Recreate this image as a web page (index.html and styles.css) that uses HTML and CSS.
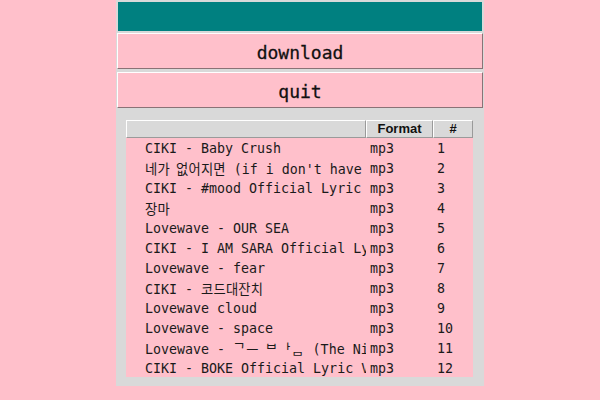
FILE: index.html
```html
<!DOCTYPE html>
<html>
<head>
<meta charset="utf-8">
<link rel="stylesheet" href="styles.css">
</head>
<body>
<div class="app">
  <div class="banner"></div>
  <button class="btn">download</button>
  <button class="btn">quit</button>
  <div class="tree">
    <div class="head">
      <div class="hcell"></div>
      <div class="hcell">Format</div>
      <div class="hcell">#</div>
    </div>
    <div class="row"><div class="c0">CIKI - Baby Crush</div><div class="c1">mp3</div><div class="c2">1</div></div>
    <div class="row"><div class="c0"><span class="ko">네가 없어지면</span> (if i don't have you)</div><div class="c1">mp3</div><div class="c2">2</div></div>
    <div class="row"><div class="c0">CIKI - #mood Official Lyric Video</div><div class="c1">mp3</div><div class="c2">3</div></div>
    <div class="row"><div class="c0"><span class="ko">장마</span></div><div class="c1">mp3</div><div class="c2">4</div></div>
    <div class="row"><div class="c0">Lovewave - OUR SEA</div><div class="c1">mp3</div><div class="c2">5</div></div>
    <div class="row"><div class="c0">CIKI - I AM SARA Official Lyric Video</div><div class="c1">mp3</div><div class="c2">6</div></div>
    <div class="row"><div class="c0">Lovewave - fear</div><div class="c1">mp3</div><div class="c2">7</div></div>
    <div class="row"><div class="c0">CIKI - <span class="ko">코드대잔치</span></div><div class="c1">mp3</div><div class="c2">8</div></div>
    <div class="row"><div class="c0">Lovewave cloud</div><div class="c1">mp3</div><div class="c2">9</div></div>
    <div class="row"><div class="c0">Lovewave - space</div><div class="c1">mp3</div><div class="c2">10</div></div>
    <div class="row"><div class="c0">Lovewave - <span class="jamo">ᄀ&#x200C;ᅳ ᄇ&#x200C;ᅡ&#x200C;ᆷ</span> (The Night)</div><div class="c1">mp3</div><div class="c2">11</div></div>
    <div class="row"><div class="c0">CIKI - BOKE Official Lyric Video</div><div class="c1">mp3</div><div class="c2">12</div></div>
  </div>
</div>
</body>
</html>
```
FILE: styles.css
```css
html, body {
  margin: 0;
  padding: 0;
  background: #ffc0cb;
}
.app {
  width: 368px;
  margin: 0 auto 0 116px;
  background: #d9d9d9;
  padding: 2px 0 9px 0;
  display: flex;
  flex-direction: column;
}
.banner {
  height: 29px;
  margin: 0 2px;
  background: #008080;
}
.btn {
  margin: 2px 1px 0 1px;
  height: 36px;
  padding: 2px 0 0 0;
  background: #ffc0cb;
  border-style: solid;
  border-width: 1px;
  border-color: #ffffff #8a7276 #8a7276 #ffffff;
  font-family: "DejaVu Sans Mono", monospace;
  font-size: 18px;
  color: #111;
  -webkit-text-stroke: 0.3px #111;
}
.btn + .btn {
  margin-top: 3px;
}
.tree {
  margin: 12px 11px 0 10px;
  background: #ffc0cb;
  display: flex;
  flex-direction: column;
}
.head {
  display: grid;
  grid-template-columns: 240px 67px 40px;
  height: 17px;
  background: #d9d9d9;
}
.hcell {
  border-style: solid;
  border-width: 1px;
  border-color: #ffffff #9a9a9a #9a9a9a #ffffff;
  font-family: "Liberation Sans", Arial, sans-serif;
  font-weight: bold;
  font-size: 13px;
  line-height: 16px;
  text-align: center;
  color: #111;
}
.row {
  display: grid;
  grid-template-columns: 240px 67px 40px;
  height: 20px;
  font-family: "DejaVu Sans Mono", "Noto Sans CJK KR", monospace;
  font-size: 13.3px;
  line-height: 17px;
  color: #1a1a1a;
}
.c0, .c1, .c2 {
  padding-top: 3px;
  white-space: nowrap;
  overflow: hidden;
}
.c0 {
  padding-left: 19px;
}
.c1, .c2 {
  padding-left: 4px;
}
.ko {
  font-family: "Noto Sans CJK KR", sans-serif;
  letter-spacing: 0.2px;
  word-spacing: 3px;
}
.jamo {
  font-family: "Noto Sans CJK KR", sans-serif;
  letter-spacing: 0.9px;
  word-spacing: 2px;
}
```
